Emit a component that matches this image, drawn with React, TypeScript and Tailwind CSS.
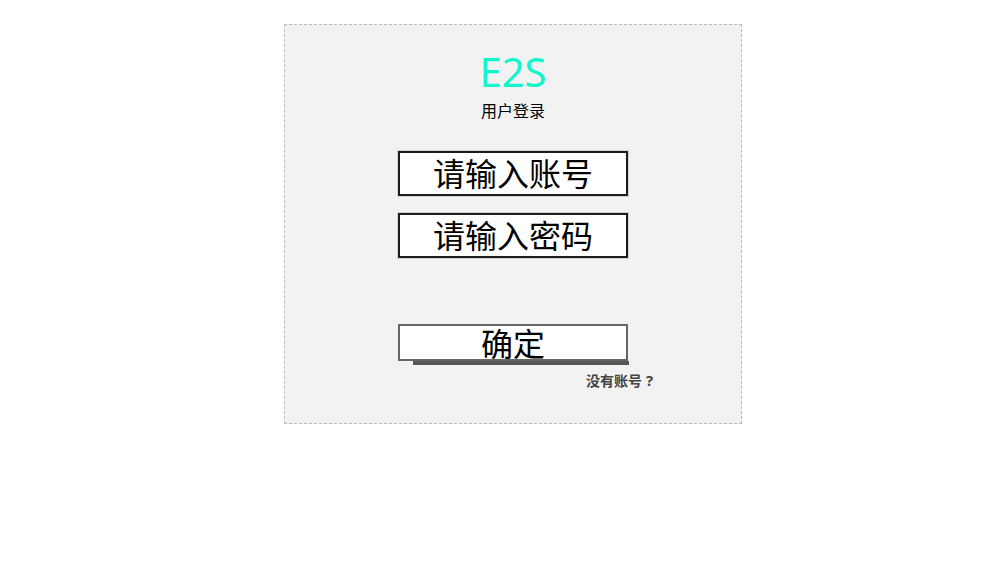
export default function App() {
  return (
    <div className="min-h-[564px] bg-white pt-[24px] pl-[284px]" style={{ fontFamily: '"Noto Sans", "Noto Sans CJK SC", sans-serif' }}>
      <div className="flex h-[400px] w-[458px] flex-col items-center border border-dashed border-[#bbbbbb] bg-[#f2f2f2] pt-[23px]">
        <h1 className="text-[40px] leading-[48px] font-normal text-[#0ff5cc]">E2S</h1>
        <p className="mt-[4px] text-[16px] leading-[20px] text-black" style={{ fontFamily: '"Noto Sans CJK SC", sans-serif' }}>用户登录</p>

        <div className="mt-[31px] flex w-[230px] flex-col" style={{ fontFamily: '"Noto Sans CJK SC", sans-serif' }}>
          <input
            className="h-[45px] w-full border-2 border-[#1c1c1c] bg-white pb-[3px] text-center text-[32px] text-black shadow-[0_0_0_1px_rgba(0,0,0,0.12)] outline-none placeholder:text-black"
            placeholder="请输入账号"
          />
          <input
            type="password"
            className="mt-[17px] h-[45px] w-full border-2 border-[#1c1c1c] bg-white pb-[3px] text-center text-[32px] text-black shadow-[0_0_0_1px_rgba(0,0,0,0.12)] outline-none placeholder:text-black"
            placeholder="请输入密码"
          />
          <button className="mt-[66px] h-[37px] w-full border-2 border-[#666666] bg-white text-[32px] leading-[33px] text-black">
            确定
          </button>
          <div className="ml-[15px] h-[4px] w-[216px] bg-[#555555]" />
          <div className="mt-[6px] flex w-[258px] justify-end text-[14px] leading-[18px] font-bold text-[#444444]">
            <span>没有账号</span>
            <span className="ml-[4px] w-[10px] text-[15px]" style={{ fontFamily: '"Noto Sans", sans-serif' }}>?</span>
          </div>
        </div>
      </div>
    </div>
  )
}
